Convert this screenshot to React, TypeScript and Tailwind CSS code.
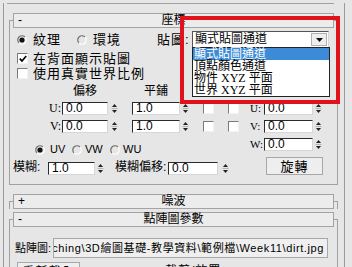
import React from 'react';

const Radio = ({ on = false }: { on?: boolean }) => (
  <svg width="10" height="10" viewBox="0 0 10 10" className="shrink-0">
    <path d="M2 8 A4.2 4.2 0 0 1 8 2" stroke="#6f6f6f" strokeWidth="1.2" fill="none" />
    <path d="M8 2 A4.2 4.2 0 0 1 2 8" stroke="#ffffff" strokeWidth="1.2" fill="none" />
    {on && <circle cx="5" cy="5" r="2.6" fill="#111" />}
  </svg>
);

const Check = ({ on = false }: { on?: boolean }) => (
  <div className="w-[11px] h-[11px] shrink-0 bg-white border border-[#7a7a7a] border-r-[#f2f2f2] border-b-[#f2f2f2] flex items-center justify-center">
    {on && (
      <svg width="8" height="8" viewBox="0 0 8 8">
        <path d="M0.8 3.6 L3 6 L7.2 1" stroke="#000" strokeWidth="1.7" fill="none" />
      </svg>
    )}
  </div>
);

const Spin = ({ className = '' }: { className?: string }) => (
  <svg width="7" height="13" viewBox="0 0 7 13" className={`shrink-0 ${className}`}>
    <path d="M3.5 2 L6 5 L1 5 Z" fill="#222" />
    <line x1="0.5" y1="6.5" x2="6.5" y2="6.5" stroke="#b5b5b5" />
    <path d="M1 8 L6 8 L3.5 11 Z" fill="#222" />
  </svg>
);

const Num = ({ className, value }: { className: string; value: string }) => (
  <div
    className={`h-[13px] shrink-0 bg-white border border-[#2a2a2a] border-r-[#d6d6d6] border-b-[#d6d6d6] pl-[3px] text-[12px] leading-[11px] font-['Liberation_Sans',sans-serif] ${className}`}
  >
    {value}
  </div>
);

const Header = ({ sign, title }: { sign: string; title: string }) => (
  <div className="-mt-[8px] mx-[3px] h-[15px] flex items-center bg-[#ececec] border border-[#a3a3a3] text-[12px] leading-[13px]">
    <span className="w-[12px] pl-[4px] font-['Liberation_Sans',sans-serif]">{sign}</span>
    <span className="flex-1 text-center pr-[12px]">{title}</span>
  </div>
);

export default function App() {
  return (
    <div className="relative w-[352px] h-[267px] overflow-hidden bg-[#e6e6e6] text-black font-['Liberation_Sans','Noto_Sans_CJK_TC',sans-serif]">
      <div className="ml-[3px] w-[342px] h-full border-l border-r border-[#9a9a9a]">
        <div className="ml-[3px] mt-[3px] w-[327px] h-px bg-[#a0a0a0]" />

        {/* 座標 */}
        <div className="ml-[5px] mt-[16px] w-[329px] border border-[#a0a0a0]">
          <Header sign="-" title="座標" />

          <div className="mt-[3px] h-[17px] flex items-center">
            <div className="w-[7px]" />
            <Radio on />
            <span className="ml-[6px] w-[44px] text-[13px] tracking-[1px] leading-[15px]">紋理</span>
            <Radio />
            <span className="ml-[6px] w-[64px] text-[13px] tracking-[1px] leading-[15px]">環境</span>
            <span className="w-[35px] whitespace-nowrap text-[13px] tracking-[1px] leading-[15px]">貼圖:</span>
            <div className="w-[137px] h-[17px] bg-white border border-[#555] border-r-[#d6d6d6] border-b-[#d6d6d6] flex items-center">
              <span className="flex-1 pl-[2px] text-[12px] leading-[13px]">顯式貼圖通道</span>
              <div className="w-[16px] h-[13px] mr-[1px] bg-[#eeeeee] border border-[#b0b0b0] flex items-center justify-center">
                <svg width="7" height="4" viewBox="0 0 7 4">
                  <path d="M0 0 L7 0 L3.5 4 Z" fill="#111" />
                </svg>
              </div>
            </div>
          </div>

          <div className="mt-[3px] h-[15px] flex items-center">
            <div className="w-[7px]" />
            <Check on />
            <span className="ml-[5px] text-[13px] tracking-[1px] leading-[15px]">在背面顯示貼圖</span>
          </div>
          <div className="h-[15px] flex items-center">
            <div className="w-[7px]" />
            <Check />
            <span className="ml-[5px] text-[13px] tracking-[1px] leading-[15px]">使用真實世界比例</span>
          </div>

          {/* column labels; the mirror / tile / angle ones sit under the open list */}
          <div className="mt-[3px] h-[14px] flex items-center text-[12px] leading-[14px]">
            <div className="w-[52px]" />
            <span className="w-[46px] text-center">偏移</span>
            <div className="w-[24px]" />
            <span className="w-[48px] text-center">平鋪</span>
          </div>

          {['U', 'V'].map((k, i) => (
            <div key={k} className={`${i === 0 ? 'mt-[4px]' : 'mt-[5px]'} h-[13px] flex items-center`}>
              <span className="w-[52px] pr-[1px] text-right whitespace-nowrap text-[12px] leading-[13px] font-['Liberation_Serif',serif]">{k}:</span>
              <Num className="w-[46px]" value="0.0" />
              <Spin className="ml-[3px]" />
              <Num className="ml-[14px] w-[48px]" value="1.0" />
              <Spin className="ml-[2px]" />
              <div className="ml-[14px]">
                <Check />
              </div>
              <div className="ml-[14px]">
                <Check />
              </div>
              <span className="ml-[11px] w-[14px] whitespace-nowrap text-[11px] leading-[13px] font-['Liberation_Serif',serif]">{k}:</span>
              <Num className="w-[49px]" value="0.0" />
              <Spin className="ml-[2px]" />
            </div>
          ))}

          <div className="mt-[5px] h-[17px] flex items-start">
            <div className="w-[240px] mt-[6px] flex items-center text-[11px] leading-[11px]">
              <div className="w-[25px]" />
              <Radio on />
              <span className="ml-[5px] w-[22px]">UV</span>
              <Radio />
              <span className="ml-[3px] w-[25px]">VW</span>
              <Radio />
              <span className="ml-[3px]">WU</span>
            </div>
            <span className="w-[14px] whitespace-nowrap text-[11px] leading-[13px] font-['Liberation_Serif',serif]">W:</span>
            <Num className="w-[49px]" value="0.0" />
            <Spin className="ml-[2px]" />
          </div>

          <div className="mt-[2px] h-[18px] flex items-end text-[12px] leading-[13px]">
            <div className="w-[3px]" />
            <span className="w-[35px] mb-[1px] whitespace-nowrap">模糊:</span>
            <Num className="w-[47px]" value="1.0" />
            <Spin className="ml-[2px]" />
            <span className="ml-[11px] w-[53px] mb-[1px] whitespace-nowrap">模糊偏移:</span>
            <Num className="w-[50px]" value="0.0" />
            <Spin className="ml-[4px]" />
            <div className="ml-[37px] w-[57px] h-[18px] bg-[#eeeeee] border border-[#a8a8a8] flex items-center justify-center text-[13px] tracking-[1px]">
              旋轉
            </div>
          </div>
          <div className="h-[9px]" />
        </div>

        {/* 噪波 */}
        <div className="ml-[5px] mt-[16px] w-[329px] border border-b-0 border-[#a0a0a0]">
          <Header sign="+" title="噪波" />
        </div>

        {/* 點陣圖參數 */}
        <div className="ml-[5px] mt-[10px] w-[329px] border border-[#a0a0a0] pb-[20px]">
          <Header sign="-" title="點陣圖參數" />
          <div className="mt-[11px] h-[20px] flex items-center">
            <span className="ml-[5px] w-[38px] whitespace-nowrap text-[11px] leading-[13px]">點陣圖:</span>
            <div className="w-[275px] h-[20px] bg-[#efefef] border border-[#a8a8a8] overflow-hidden flex items-center justify-end pr-[3px]">
              <span className="whitespace-nowrap text-[11px] leading-[13px] tracking-[0.6px]">
                ching\3D繪圖基礎-教學資料\範例檔\Week11\dirt.jpg
              </span>
            </div>
          </div>
          <div className="mt-[4px] h-[20px] flex items-start">
            <div className="ml-[7px] w-[63px] h-[20px] bg-[#eeeeee] border border-[#a8a8a8] flex items-center justify-center text-[12px] tracking-[1px]">
              重新載入
            </div>
            <div className="ml-[85px] mt-[3px] text-[12px] leading-[13px] tracking-[1px]">裁剪/放置</div>
          </div>
        </div>
      </div>

      {/* open dropdown list */}
      <div className="absolute left-[192px] top-[47px] w-[138px] bg-white border border-[#222] font-['Liberation_Serif','Noto_Sans_CJK_TC',serif] text-[12px] leading-[12px]">
        <div className="h-[12px] bg-[#3d8ad6] text-white pl-[1px]">顯式貼圖通道</div>
        <div className="h-[12px] pl-[1px]">頂點顏色通道</div>
        <div className="h-[12px] pl-[1px]">物件 XYZ 平面</div>
        <div className="h-[12px] pl-[1px]">世界 XYZ 平面</div>
      </div>

      {/* red highlight */}
      <div className="absolute left-[180px] top-[16px] w-[160px] h-[88px] border-[4px] border-[#e0121c]" />
    </div>
  );
}
